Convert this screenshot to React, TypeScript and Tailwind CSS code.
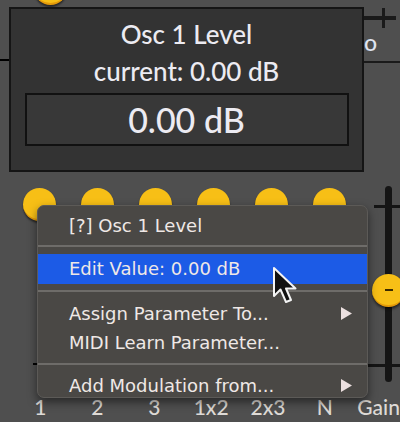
import React from 'react';

const Knob = ({ className = '' }: { className?: string }) => (
  <div
    className={`w-[33px] h-[33px] shrink-0 rounded-full bg-[#f7bf16] border-b-2 border-[#e39a0a] shadow-[0_2px_2px_rgba(0,0,0,0.5)] ${className}`}
  />
);

const Arrow = () => (
  <svg width="13" height="15" viewBox="0 0 13 15" className="mr-[14px]">
    <path d="M1 1 L12 7.5 L1 14 Z" fill="#ece0e0" />
  </svg>
);

const Cursor = () => (
  <svg width="28" height="40" viewBox="0 0 28 40">
    <path
      d="M2 2 L2 30 L8.5 23.5 L14 36 L19 34 L14 22.5 L23.5 22.5 Z"
      fill="#111"
      stroke="#f4f4f4"
      strokeWidth="2"
      strokeLinejoin="round"
    />
  </svg>
);

const Separator = () => <div className="h-[2px] my-[6px] bg-[#6e6c69]" />;

const App = () => {
  const labels = ['1', '2', '3', '1x2', '2x3', 'N'];

  return (
    <div className="relative w-[400px] h-[422px] overflow-hidden bg-[#4f4f4f] font-['Lato',sans-serif]">
      {/* panel behind the popups */}
      <div className="flex flex-col">
        <div className="h-[188px] flex items-start">
          <div className="mt-[59px] w-[12px] h-[2px] bg-black" />
          <Knob className="-mt-[28px] ml-[22px]" />
          <div className="ml-auto w-[40px] flex flex-col">
            <div className="relative mt-[8px] h-[20px] w-[36px] flex items-center">
              <div className="w-full h-[4px] bg-[#1a1a1a]" />
              <div className="absolute left-[22px] top-0 w-[3px] h-full bg-[#1a1a1a]" />
            </div>
            <div className="pl-[4px] -mt-[3px] h-[36px] text-[23px] font-medium text-[#dfe3f0]">o</div>
            <div className="h-[2px] bg-[#1a1a1a]" />
          </div>
        </div>

        <div className="h-[196px] flex">
          <div className="flex flex-col">
            <div className="flex pl-[23px] gap-[25px]">
              {labels.map((l) => (
                <Knob key={l} />
              ))}
            </div>
            <div className="mt-[142px] ml-[33px] w-[8px] h-[2px] bg-black" />
          </div>

          {/* gain slider */}
          <div className="relative ml-auto -mt-[2px] w-[32px] h-[196px] flex flex-col">
            <div className="absolute left-[17px] top-0 w-[7px] h-full bg-[#151515] rounded-full" />
            <div className="relative mt-[19px] self-end w-[26px] h-[3px] bg-[#151515]" />
            <div className="relative mt-[66px] ml-[4px] w-[33px] h-[33px] rounded-full bg-[#f7bf16] border-b-2 border-[#e39a0a] shadow-[0_2px_3px_rgba(0,0,0,0.6)] flex items-center justify-center">
              <div className="w-[8px] h-[2px] bg-[#3a2a00]" />
            </div>
            <div className="relative mt-[57px] w-[32px] h-[3px] bg-[#151515]" />
          </div>
        </div>

        <div className="flex pl-[12px] mt-[12px] text-[21px] font-medium text-[#dedad6] leading-none">
          {labels.map((l) => (
            <span key={l} className="w-[58px] text-center">
              {l}
            </span>
          ))}
          <span className="ml-[4px]">Gain</span>
        </div>
      </div>

      {/* value tooltip */}
      <div className="absolute left-[9px] top-[7px] w-[355px] h-[165px] bg-[#333333] border-2 border-[#151515] flex flex-col items-center text-[#ecebf2] font-medium">
        <div className="mt-[10px] text-[26px] leading-[30px]">Osc 1 Level</div>
        <div className="mt-[8px] text-[26px] leading-[28px]">current: 0.00 dB</div>
        <div className="mt-[8px] w-[324px] h-[53px] bg-[#383838] border-2 border-[#111] flex items-center justify-center text-[34px]">
          0.00 dB
        </div>
      </div>

      {/* context menu */}
      <div className="absolute left-[37px] top-[205px] w-[331px] h-[193px] rounded-[7px] bg-[#4a4845] border border-[#5c5a57] shadow-[0_4px_10px_rgba(0,0,0,0.5)] pt-[7px] font-['DejaVu_Sans',sans-serif] text-[18px] text-[#efe8e6]">
        <div className="pl-[31px] h-[26px] leading-[26px]">[?] Osc 1 Level</div>
        <Separator />
        <div className="pl-[31px] h-[30px] leading-[30px] bg-[#1c5be6] mt-[7px]">Edit Value: 0.00 dB</div>
        <Separator />
        <div className="flex items-center justify-between pl-[31px] h-[29px] mt-[7px]">
          <span>Assign Parameter To...</span>
          <Arrow />
        </div>
        <div className="pl-[31px] h-[29px] leading-[29px]">MIDI Learn Parameter...</div>
        <Separator />
        <div className="flex items-center justify-between pl-[31px] h-[29px]">
          <span>Add Modulation from...</span>
          <Arrow />
        </div>
      </div>

      <div className="absolute left-[272px] top-[266px]">
        <Cursor />
      </div>
    </div>
  );
};

export default App;
